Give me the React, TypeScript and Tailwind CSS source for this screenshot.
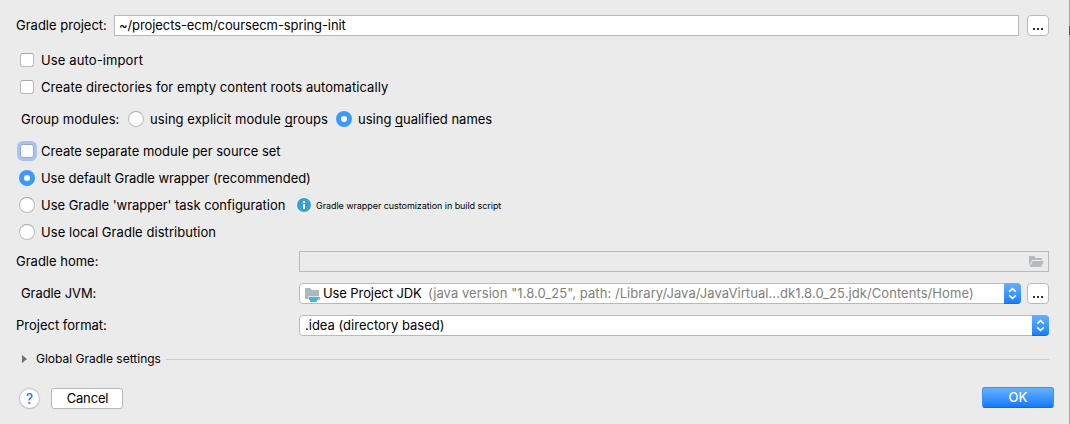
import type { ReactNode } from "react";

function Checkbox({ focused = false }: { focused?: boolean }) {
  return (
    <span
      className={
        focused
          ? "mx-px size-[14px] shrink-0 rounded-[3px] border border-[#8fa9dd] bg-white shadow-[0_0_0_3px_#a9c2f2]"
          : "mx-px size-[14px] shrink-0 rounded-[3px] border border-[#b9b9b9] border-t-[#a9a9a9] bg-white"
      }
    />
  );
}

function Radio({ checked = false }: { checked?: boolean }) {
  return checked ? (
    <span className="flex size-4 shrink-0 items-center justify-center rounded-full bg-[#3b99fc]">
      <span className="size-[6px] rounded-full bg-white" />
    </span>
  ) : (
    <span className="size-4 shrink-0 rounded-full border border-[#bdbdbd] border-t-[#a9a9a9] bg-white" />
  );
}

function Mnemonic({ children }: { children: ReactNode }) {
  return <u className="underline-offset-2 [text-decoration-skip-ink:none]">{children}</u>;
}

function Option({ control, className, children }: { control: ReactNode; className: string; children: ReactNode }) {
  return (
    <label className="flex h-4 items-center">
      {control}
      <span className={`ml-[6px] ${className}`}>{children}</span>
    </label>
  );
}

function MoreButton() {
  return (
    <button className="ml-[6px] flex h-[21px] w-[22px] shrink-0 items-center justify-center rounded-[4px] border border-[#b9b9b9] bg-white">
      <svg width="10" height="2" viewBox="0 0 10 2" className="mt-[7px]" fill="#333">
        <rect x="0" width="2" height="2" />
        <rect x="4" width="2" height="2" />
        <rect x="8" width="2" height="2" />
      </svg>
    </button>
  );
}

function Stepper() {
  return (
    <span className="-my-px -mr-px flex h-[21px] w-[17px] shrink-0 items-center justify-center rounded-r-[4px] border-b border-[#0b6cf5] bg-linear-to-b from-[#65b0fa] to-[#1580fe]">
      <svg width="9" height="13" viewBox="0 0 9 13" fill="none" stroke="white" strokeWidth="1.5">
        <path d="M1.2 4.6 4.5 1.6 7.8 4.6M1.2 8.4 4.5 11.4 7.8 8.4" />
      </svg>
    </span>
  );
}

export default function App() {
  return (
    <div className="flex h-[424px] w-[1070px] overflow-hidden">
      <main className="flex w-[1069px] flex-col bg-[#ebebeb] pt-[15px] font-['Inter',sans-serif] text-[13px] leading-4 whitespace-nowrap text-black">
        <div className="flex h-[21px] items-center pl-4">
          <span className="w-[98px] pb-px">Gradle project:</span>
          <div className="flex h-[21px] w-[905px] items-center border border-[#b9b9b9] bg-white pb-px pl-[4px] tracking-[-0.09px]">
            ~/projects-ecm/coursecm-spring-init
          </div>
          <span className="ml-[2px] flex">
            <MoreButton />
          </span>
        </div>

        <div className="mt-4 flex flex-col gap-[11px] pl-[19px]">
          <Option control={<Checkbox />} className="tracking-[0.12px]">Use auto-import</Option>
          <Option control={<Checkbox />} className="tracking-[0.07px]">
            Create directories for empty content roots automatically
          </Option>
        </div>

        <div className="mt-4 flex h-4 items-center pl-[21px]">
          <span className="w-[107px] tracking-[0.05px]">Group modules:</span>
          <div className="w-[208px]">
            <Option control={<Radio />} className="tracking-[0.06px]">
              using explicit module <Mnemonic>g</Mnemonic>roups
            </Option>
          </div>
          <Option control={<Radio checked />} className="">
            using <Mnemonic>q</Mnemonic>ualified names
          </Option>
        </div>

        <div className="mt-4 flex flex-col gap-[11px] pl-[19px]">
          <Option control={<Checkbox focused />} className="">Create separate module per source set</Option>
          <Option control={<Radio checked />} className="tracking-[-0.05px]">
            Use default Gradle wrapper (recommended)
          </Option>
          <div className="flex h-4 items-center">
            <div className="w-[278px]">
              <Option control={<Radio />} className="tracking-[-0.03px]">Use Gradle 'wrapper' task configuration</Option>
            </div>
            <svg width="14" height="14" viewBox="0 0 14 14">
              <circle cx="7" cy="7" r="7" fill="#389fd6" />
              <path d="M6 3h2v2H6zM6 6h2v5H6z" fill="white" />
            </svg>
            <span className="ml-[5px] pt-[2px] text-[9px] tracking-[-0.06px]">Gradle wrapper customization in build script</span>
          </div>
          <Option control={<Radio />} className="tracking-[0.05px]">Use local Gradle distribution</Option>
        </div>

        <div className="mt-[11px] flex h-[21px] items-center pl-4">
          <span className="w-[283px] pb-px">Gradle home:</span>
          <div className="flex h-[21px] w-[750px] items-center justify-end border border-[#b9b9b9] pr-[4px]">
            <svg width="15" height="12" viewBox="0 0 15 12" fill="#b5babd">
              <path d="M0 0h5l1.500 2H13v2H3L0 10z" />
              <path d="M3.700 5H15l-3 6H.7z" />
            </svg>
          </div>
        </div>

        <div className="mt-[11px] flex h-[21px] items-center pl-[21px]">
          <span className="w-[278px] pb-px tracking-[-0.08px]">Gradle JVM:</span>
          <div className="flex h-[21px] w-[722px] items-center rounded-[4px] border border-[#b9b9b9] bg-white pl-[5px]">
            <svg width="16" height="16" viewBox="0 0 16 16" className="mt-[3px] shrink-0">
              <path d="M0 1h5l2 2h7v9H0z" fill="#adb7be" />
              <path d="M3 9h12v4H4z" fill="white" opacity="0.6" />
              <path d="M4 10h9v2c0 1.200-1 1.700-1.800 2.200H12V15H5v-.8h.8C5 13.700 4 13.200 4 12z" fill="#40b6e0" />
              <path d="M12.500 10.500h2.200v1.800h-2.200" fill="none" stroke="#40b6e0" />
            </svg>
            <span className="ml-[2px] w-[105px] pb-px tracking-[-0.1px]">Use Project JDK</span>
            <span className="flex-1 pb-px tracking-[0.07px] text-[#808080]">
              (java version "1.8.0_25", path: /Library/Java/JavaVirtual...dk1.8.0_25.jdk/Contents/Home)
            </span>
            <Stepper />
          </div>
          <MoreButton />
        </div>

        <div className="mt-[11px] flex h-[21px] items-center pl-4">
          <span className="w-[283px] pb-px">Project format:</span>
          <div className="flex h-[21px] w-[750px] items-center justify-between rounded-[4px] border border-[#b9b9b9] bg-white pl-[5px]">
            <span className="pb-px">.idea (directory based)</span>
            <Stepper />
          </div>
        </div>

        <div className="mt-[15px] flex h-4 items-center pl-[22px]">
          <svg width="5" height="8" viewBox="0 0 5 8" fill="#6e6e6e">
            <path d="M0 0 5 4 0 8z" />
          </svg>
          <span className="ml-[9px] w-[130px] text-[12px]">Global Gradle settings</span>
          <span className="h-px w-[883px] bg-[#cfcfcf]" />
        </div>

        <div className="mt-5 flex pl-5">
          <button className="mt-[2px] flex size-[19px] items-center justify-center rounded-full bg-white text-[14px] font-medium text-[#1a82fb] shadow-[0_0_1px_1px_#c4c4c4,0_1px_1px_#b0b0b0]">
            ?
          </button>
          <button className="mt-px ml-[12px] h-[21px] w-[72px] rounded-[3px] border border-[#b9b9b9] bg-white pb-px pl-px leading-[18px] tracking-[-0.15px]">
            Cancel
          </button>
          <button className="ml-[859px] h-[21px] w-[72px] rounded-[3px] border border-[#3b93f8] border-b-[#0768f2] bg-linear-to-b from-[#65b0fa] to-[#0a7aff] pb-px leading-[18px] font-medium text-white">
            OK
          </button>
        </div>
      </main>
      <div className="w-px bg-[#a6a6a6] pt-[26px]">
        <div className="h-[9px] bg-[#555]" />
      </div>
    </div>
  );
}
